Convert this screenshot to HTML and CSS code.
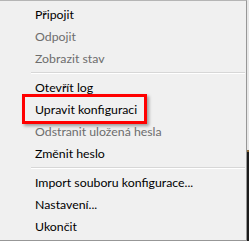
FILE: index.html
```html
<!DOCTYPE html>
<html lang="cs">
<head>
<meta charset="utf-8">
<title>Menu</title>
<link rel="stylesheet" href="styles.css">
</head>
<body>
<div class="menu">
  <div class="item">Připojit</div>
  <div class="item disabled">Odpojit</div>
  <div class="item disabled">Zobrazit stav</div>
  <div class="sep"></div>
  <div class="item">Otevřít log</div>
  <div class="item marked">Upravit konfiguraci<span class="mark"></span></div>
  <div class="item disabled">Odstranit uložená hesla</div>
  <div class="item">Změnit heslo</div>
  <div class="sep"></div>
  <div class="item">Import souboru konfigurace...</div>
  <div class="item">Nastavení...</div>
  <div class="item">Ukončit</div>
</div>
</body>
</html>
```
FILE: styles.css
```css
html, body {
  margin: 0;
  padding: 0;
}
body {
  width: 249px;
  height: 241px;
  overflow: hidden;
  background: linear-gradient(to bottom, #e8e8e8 0, #e8e8e8 150px, #8a6a3a 150px, #8a6a3a 152px, #1b1b1b 152px);
  font-family: Lato, "Noto Sans", sans-serif;
  font-size: 12.3px;
}
.menu {
  box-sizing: border-box;
  width: 247px;
  height: 241px;
  background: #f0f0f0;
  border-top: 1px solid #b5b5b5;
  border-right: 1px solid #979797;
  border-bottom: 1px solid #979797;
  padding: 3px 0 2px 0;
  display: flex;
  flex-direction: column;
}
.item {
  position: relative;
  height: 22px;
  line-height: 22px;
  padding-left: 35px;
  color: #000;
  white-space: nowrap;
}
.item.disabled {
  color: #6d6d6d;
}
.sep {
  height: 7px;
  margin: 0 1px 0 31px;
  box-sizing: border-box;
  padding-top: 2px;
}
.sep::before {
  content: "";
  display: block;
  height: 1px;
  background: #d7d7d7;
  border-bottom: 1px solid #ffffff;
}
.mark {
  position: absolute;
  left: 22px;
  top: -5px;
  width: 125px;
  height: 30px;
  box-sizing: border-box;
  border: 3px solid #ff0000;
  box-shadow: 2px 2px 3px rgba(0, 0, 0, 0.35);
}
```
